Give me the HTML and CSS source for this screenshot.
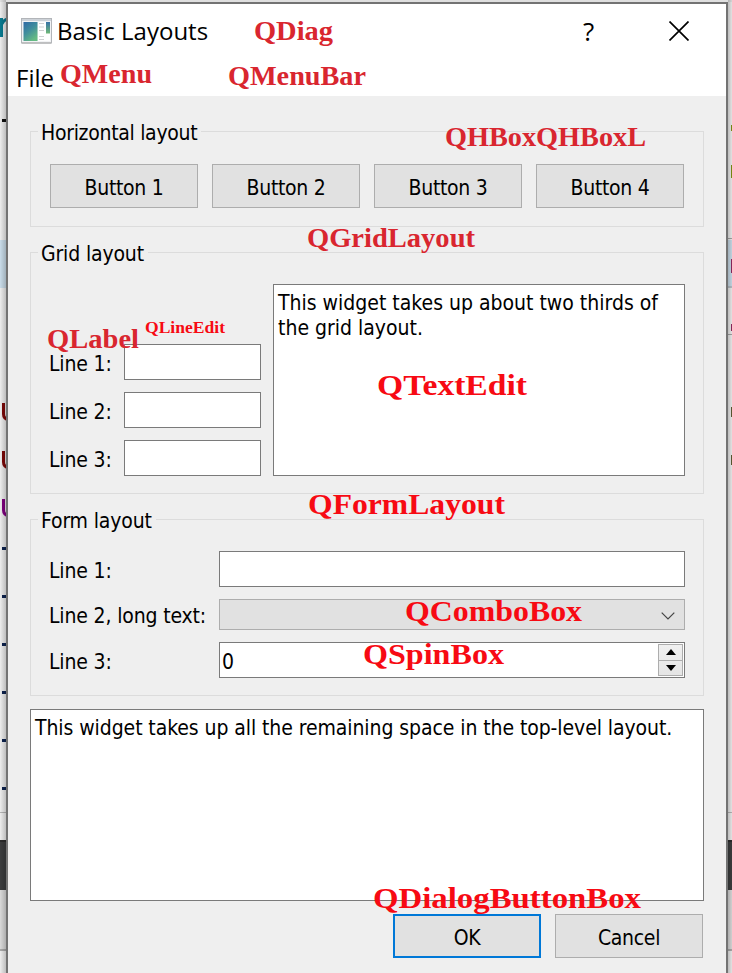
FILE: index.html
```html
<!DOCTYPE html>
<html lang="en">
<head>
<meta charset="utf-8">
<title>Basic Layouts</title>
<link rel="stylesheet" href="styles.css">
</head>
<body>
<svg class="backdrop" width="732" height="973" viewBox="0 0 732 973" aria-hidden="true">
  <defs>
    <linearGradient id="sl"><stop offset="0" stop-color="#000" stop-opacity="0"/><stop offset="1" stop-color="#000" stop-opacity=".2"/></linearGradient>
    <linearGradient id="sr"><stop offset="0" stop-color="#000" stop-opacity=".2"/><stop offset="1" stop-color="#000" stop-opacity=".05"/></linearGradient>
  </defs>
  <rect width="732" height="973" fill="#ededed"/>
  <rect y="240" width="732" height="48" fill="#c9dce9"/>
  <path d="M727 238.500H732M727 287H732M727 334.500H732" stroke="#a3a3a3"/>
  <rect y="812" width="732" height="1" fill="#b5b5b5"/>
  <rect y="840" width="732" height="50" fill="#3c3d3e"/>
  <rect y="840" width="732" height="2" fill="#2c2c2c"/>
  <rect y="890" width="732" height="59" fill="#dadada"/>
  <rect y="949" width="732" height="2" fill="#aaa"/>
  <g class="code">
    <path d="M1.500 37V18M2 24Q4 19 9 19" fill="none" stroke="#087a90" stroke-width="3"/>
    <path d="M2 120.500H8" stroke="#111" stroke-width="3"/>
    <path d="M3.500 403V414Q3.500 419 9 420" fill="none" stroke="#7d0808" stroke-width="3"/>
    <path d="M3.500 451V462Q3.500 467 9 468" fill="none" stroke="#7d0808" stroke-width="3"/>
    <path d="M3.500 499V510Q3.500 515 9 516" fill="none" stroke="#800080" stroke-width="3"/>
    <path d="M2 548.500H8M2 596.500H8M2 644.500H8M2 692.500H8M2 740.500H8M2 788.500H8" stroke="#0d2350" stroke-width="3"/>
    <path d="M731.500 125V131M731.500 165V178" stroke="#7c8e12"/>
    <path d="M731.500 259V273M731.500 324V331" stroke="#8f285d"/>
    <path d="M731.500 407V417M731.500 455V465" stroke="#5b5a32"/>
  </g>
  <rect width="6" height="973" fill="url(#sl)"/>
  <rect x="728" width="4" height="973" fill="url(#sr)"/>
  <rect width="732" height="2" fill="#000" fill-opacity=".06"/>
</svg>

<main class="dialog">
  <header class="titlebar">
    <svg class="app-icon" width="31" height="26" viewBox="0 0 31 26">
      <defs>
        <linearGradient id="pane" x2=".6" y2="1"><stop offset="0" stop-color="#2f69a5"/><stop offset=".5" stop-color="#408d9d"/><stop offset="1" stop-color="#65bb83"/></linearGradient>
        <linearGradient id="side" x2="0" y2="1"><stop offset="0" stop-color="#3873a8"/><stop offset="1" stop-color="#70b977"/></linearGradient>
      </defs>
      <rect x=".5" y=".5" width="30" height="24.500" fill="#f1f2f4" stroke="#b2b5b9"/>
      <path d="M1 2H30" stroke="#cdd2d8" stroke-width="2"/>
      <path d="M1 25H30" stroke="#aaa" stroke-width="1"/>
      <rect x="2.500" y="4" width="14" height="19" fill="url(#pane)"/>
      <rect x="17" y="4" width="12" height="19" fill="#fff"/>
      <path d="M18 5.500H23M18 9H23M18 12.500H23M18 18.500H23M18 21.500H23" stroke="#cfd1d3"/>
      <rect x="25" y="4" width="4" height="11.500" fill="url(#side)"/>
    </svg>
    <h1>Basic Layouts</h1>
    <span class="help">?</span>
    <svg class="close" width="20" height="20" viewBox="0 0 20 20"><path d="M.5.5 19.500 19.500M19.500.5.5 19.500" stroke="#000" stroke-width="1.700"/></svg>
  </header>
  <nav class="menubar"><span>File</span></nav>

  <div class="content">
    <section class="group">
      <h2>Horizontal layout</h2>
      <div class="button-row">
        <button>Button 1</button><button>Button 2</button><button>Button 3</button><button>Button 4</button>
      </div>
    </section>

    <section class="group group-grid">
      <h2>Grid layout</h2>
      <div class="grid">
        <div class="lines">
          <label>Line 1:</label><div class="field"></div>
          <label>Line 2:</label><div class="field"></div>
          <label>Line 3:</label><div class="field"></div>
        </div>
        <div class="text-edit">This widget takes up about two thirds of<br>the grid layout.</div>
      </div>
    </section>

    <section class="group group-form">
      <h2>Form layout</h2>
      <div class="form">
        <label>Line 1:</label><div class="field"></div>
        <label class="long">Line 2, long text:</label>
        <div class="combo"><svg width="14" height="8" viewBox="0 0 14 8"><path d="M.7.7 7 7 13.300.7" fill="none" stroke="#444" stroke-width="1.200"/></svg></div>
        <label>Line 3:</label>
        <div class="field spin"><span>0</span>
          <div class="steps">
            <i><svg width="10" height="6" viewBox="0 0 10 6"><path d="M0 6 5 0 10 6Z"/></svg></i>
            <i><svg width="10" height="6" viewBox="0 0 10 6"><path d="M0 0H10L5 6Z"/></svg></i>
          </div>
        </div>
      </div>
    </section>

    <div class="text-edit big">This widget takes up all the remaining space in the top-level layout.</div>

    <footer class="actions"><button class="default">OK</button><button class="cancel">Cancel</button></footer>
  </div>
</main>

<svg class="notes" width="732" height="973" viewBox="0 0 732 973">
  <g class="crimson">
    <text x="254" y="40" textLength="79" lengthAdjust="spacingAndGlyphs">QDiag</text>
    <text x="60" y="83" textLength="92" lengthAdjust="spacingAndGlyphs">QMenu</text>
    <text x="228" y="85" textLength="138" lengthAdjust="spacingAndGlyphs">QMenuBar</text>
    <text x="445" y="146" textLength="201" lengthAdjust="spacingAndGlyphs">QHBoxQHBoxL</text>
    <text x="307" y="247" textLength="168" lengthAdjust="spacingAndGlyphs">QGridLayout</text>
    <text x="47" y="348" textLength="92" lengthAdjust="spacingAndGlyphs">QLabel</text>
  </g>
  <g class="red">
    <text class="small" x="145" y="333" textLength="80" lengthAdjust="spacingAndGlyphs">QLineEdit</text>
    <text x="377" y="395" textLength="150" lengthAdjust="spacingAndGlyphs">QTextEdit</text>
    <text x="308" y="514" textLength="197" lengthAdjust="spacingAndGlyphs">QFormLayout</text>
    <text x="405" y="621" textLength="177" lengthAdjust="spacingAndGlyphs">QComboBox</text>
    <text x="363" y="664" textLength="141" lengthAdjust="spacingAndGlyphs">QSpinBox</text>
    <text x="373" y="908" textLength="268" lengthAdjust="spacingAndGlyphs">QDialogButtonBox</text>
  </g>
</svg>
</body>
</html>
```
FILE: styles.css
```css
* { box-sizing: border-box; }

body {
  margin: 0;
  height: 973px;
  padding: 2px 4px 0 6px;
  overflow: hidden;
  position: relative;
  font: 21px/25px "DejaVu Sans Condensed", "DejaVu Sans", sans-serif;
  letter-spacing: -0.1px;
  color: #000;
}

svg { display: block; }

.backdrop, .notes { position: absolute; left: 0; top: 0; }
.backdrop { z-index: -1; }

.dialog {
  height: 971px;
  border: 2px solid #737373;
  border-bottom: 0;
  background: #efefef;
}

.titlebar {
  display: flex;
  align-items: center;
  height: 54px;
  padding: 0 37px 0 13px;
  background: #fff;
  font-family: "Open Sans", sans-serif;
}
.app-icon { margin-bottom: 1px; }
h1 { flex: 1; margin: 0 0 0 5px; font-size: 24px; font-weight: 400; line-height: 32px; letter-spacing: 0; }
.help { font-size: 26px; margin-right: 75px; }

.menubar {
  height: 38px;
  padding: 4px 8px;
  background: #fff;
  font: 24px/32px "Open Sans", sans-serif;
  letter-spacing: 0;
}

.content { padding: 35px 22px 0; }

.group {
  height: 96px;
  border: 1px solid #dcdcdc;
  padding: 0 19px;
}
.group-grid { height: 242px; margin-top: 25px; padding: 0 18px; }
.group-form { height: 177px; margin-top: 25px; padding: 0 18px; }

h2 {
  width: max-content;
  margin: -12px 0 0 -12px;
  padding: 0 4px 0 3px;
  background: #efefef;
  font-size: 21px;
  font-weight: 400;
  line-height: 27px;
  letter-spacing: -0.3px;
}
.group-grid h2, .group-form h2 { margin-left: -11px; letter-spacing: -0.15px; }

.button-row { display: flex; gap: 14px; margin-top: 17px; }

button {
  width: 148px;
  height: 44px;
  padding: 5px 0 0;
  border: 1px solid #adadad;
  background: #e1e1e1;
  color: #000;
  font: inherit;
  letter-spacing: -0.3px;
}
.default { border: 2px solid #0078d7; }
.cancel { letter-spacing: -0.3px; }

.grid { display: flex; gap: 12px; align-items: flex-end; margin-top: 16px; }
.lines { display: grid; grid-template-columns: 75px 137px; row-gap: 12px; align-items: center; }

label { padding-top: 4px; letter-spacing: -0.15px; }

.field { height: 36px; border: 1px solid #7a7a7a; background: #fff; }

.text-edit {
  width: 412px;
  height: 192px;
  padding: 6px 4px;
  border: 1px solid #7a7a7a;
  background: #fff;
  white-space: nowrap;
  letter-spacing: 0;
}
.big { width: auto; margin-top: 13px; letter-spacing: -0.08px; }

.form {
  display: grid;
  grid-template-columns: 170px 466px;
  row-gap: 12px;
  align-items: center;
  margin-top: 16px;
}
.combo {
  display: flex;
  align-items: center;
  justify-content: flex-end;
  height: 31px;
  padding: 2px 9px 0 0;
  border: 1px solid #adadad;
  background: #e1e1e1;
}
.spin { display: flex; justify-content: space-between; padding: 1px 1px 1px 2px; }
.spin span { padding-top: 6px; }
.steps { width: 25px; display: flex; flex-direction: column; border: 1px solid #adadad; background: linear-gradient(#f0f0f0, #e5e5e5); }
.steps i { flex: 1; display: flex; align-items: center; justify-content: center; }
.steps i + i { border-top: 1px solid #adadad; }

.actions { display: flex; justify-content: flex-end; gap: 14px; margin: 13px 1px 0 0; }

.notes { font: bold 27px "Liberation Serif", serif; letter-spacing: 0; }
.crimson { fill: #d9262f; }
.red { fill: #f70a13; font-size: 29px; }
.small { font-size: 16px; }
```
